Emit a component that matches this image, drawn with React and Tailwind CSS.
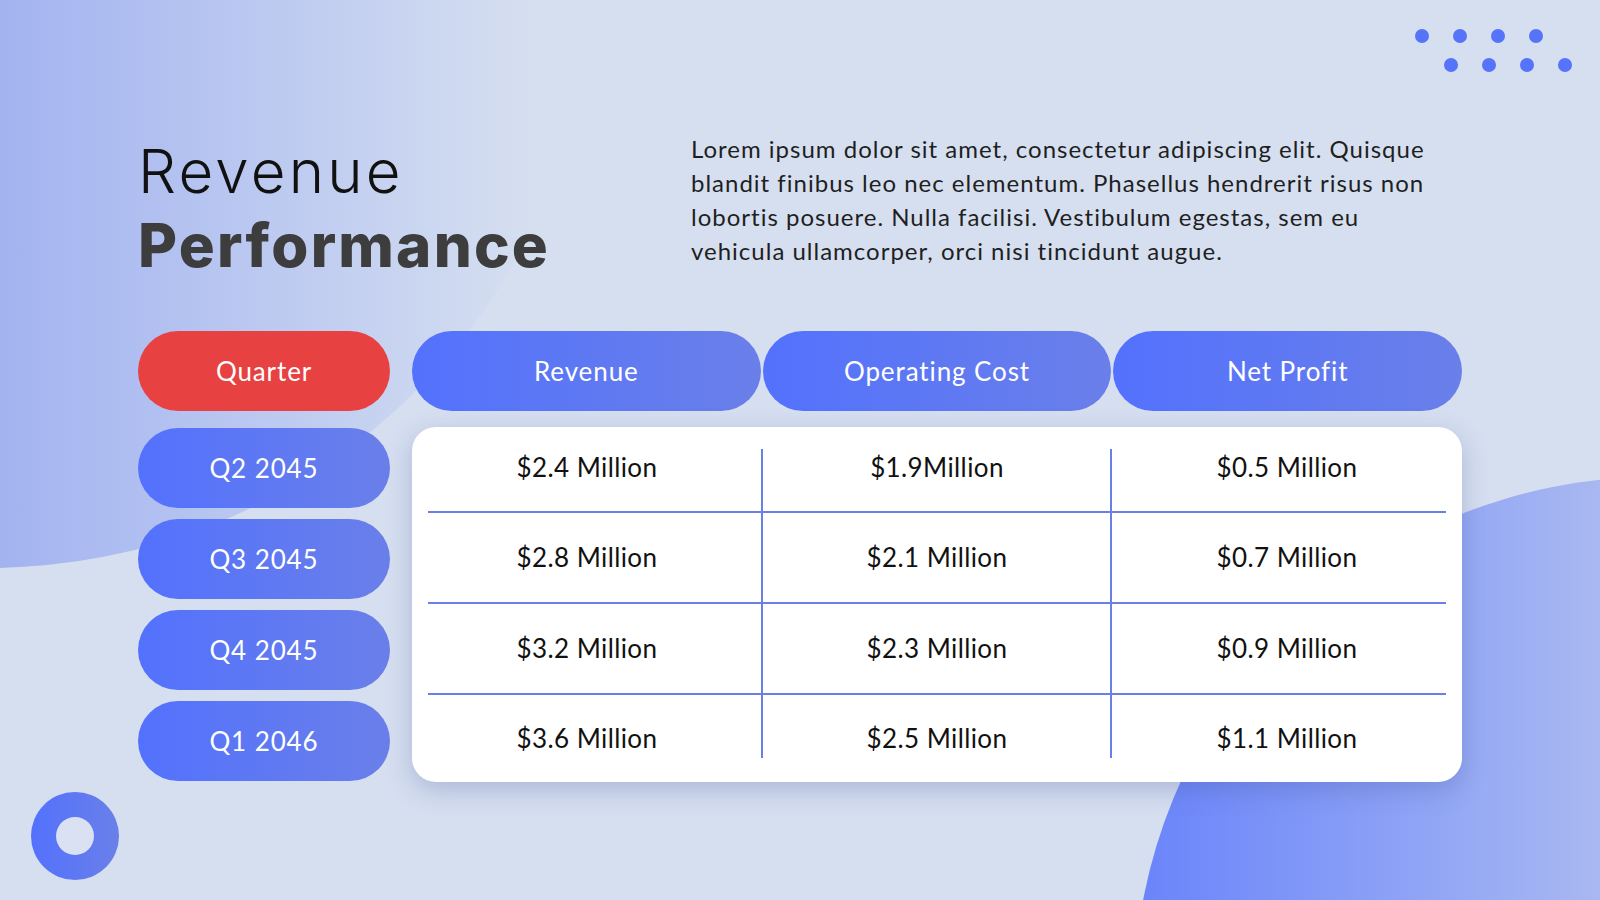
import React from 'react';

const headers = ['Revenue', 'Operating Cost', 'Net Profit'];

const rows = [
    { quarter: 'Q2 2045', values: ['$2.4 Million', '$1.9Million', '$0.5 Million'] },
    { quarter: 'Q3 2045', values: ['$2.8 Million', '$2.1 Million', '$0.7 Million'] },
    { quarter: 'Q4 2045', values: ['$3.2 Million', '$2.3 Million', '$0.9 Million'] },
    { quarter: 'Q1 2046', values: ['$3.6 Million', '$2.5 Million', '$1.1 Million'] },
];

// row heights inside the white card, matched to the quarter pills on the left
const rowClasses = ['h-[84px] pb-1', 'h-[89px]', 'h-[89px]', 'h-[87px]'];

const pill = 'flex items-center justify-center rounded-full text-white text-[26px] tracking-[0.9px] bg-gradient-to-r from-[#5371fd] to-[#6a7fe9]';

function Dots() {
    return (
        <div className="absolute top-[29px] left-[1415px] flex flex-col gap-[15px]">
            <div className="flex gap-[24px]">
                {[0, 1, 2, 3].map(i => <span key={i} className="block w-[14px] h-[14px] rounded-full bg-[#5574fa]" />)}
            </div>
            <div className="flex gap-[24px] pl-[29px]">
                {[0, 1, 2, 3].map(i => <span key={i} className="block w-[14px] h-[14px] rounded-full bg-[#5574fa]" />)}
            </div>
        </div>
    );
}

export default function App() {
    return (
        <div className="relative w-[1600px] h-[900px] overflow-hidden bg-[#d6dff0]" style={{ fontFamily: 'Lato, "Open Sans", sans-serif' }}>
            {/* background shapes */}
            <div className="absolute left-[-618px] top-[-644px] w-[1212px] h-[1212px] rounded-full bg-gradient-to-r from-[#a2b2f0] from-50% to-[#d6dff0] to-95%" />
            <div className="absolute left-[1134px] top-[477px] w-[1040px] h-[1040px] rounded-full bg-gradient-to-r from-[#6a83fa] to-[#a9b8f1] to-45%" />
            <div className="absolute left-[31px] top-[792px] w-[88px] h-[88px] rounded-full bg-gradient-to-r from-[#5371fd] to-[#6a7fe9] p-[25px]">
                <div className="w-full h-full rounded-full bg-[#d9e1f2]" />
            </div>
            <Dots />

            <div className="relative pl-[138px] pt-[132px]">
                <div className="flex">
                    <div className="w-[553px] mt-[2px] leading-[74px] text-[60px]" style={{ fontFamily: 'Inter, sans-serif' }}>
                        <div className="font-light tracking-[3.2px] text-[#111]">Revenue</div>
                        <div className="font-extrabold tracking-[2.2px] text-[#3d3d3d]">Performance</div>
                    </div>
                    <p className="w-[745px] text-[24px] leading-[34px] tracking-[1px] text-[#1f1f1f]">
                        Lorem ipsum dolor sit amet, consectetur adipiscing elit. Quisque blandit finibus leo nec elementum. Phasellus hendrerit risus non lobortis posuere. Nulla facilisi. Vestibulum egestas, sem eu vehicula ullamcorper, orci nisi tincidunt augue.
                    </p>
                </div>

                <div className="flex gap-[22px] mt-[49px]">
                    <div className="flex flex-col w-[252px]">
                        <div className="flex items-center justify-center h-[80px] rounded-full bg-[#e84141] text-white text-[26px] tracking-[0.9px]">Quarter</div>
                        <div className="flex flex-col gap-[11px] mt-[17px]">
                            {rows.map(r => (
                                <div key={r.quarter} className={`h-[80px] ${pill}`}>{r.quarter}</div>
                            ))}
                        </div>
                    </div>

                    <div className="flex flex-col w-[1050px]">
                        <div className="flex gap-[2px]">
                            {headers.map(h => (
                                <div key={h} className={`flex-1 h-[80px] ${pill}`}>{h}</div>
                            ))}
                        </div>

                        <div className="relative mt-[16px] h-[355px] rounded-[24px] bg-white shadow-[0_8px_26px_rgba(60,80,150,0.28)]">
                            <div className="absolute left-[349px] top-[22px] bottom-[24px] w-[2px] bg-[#6a80e4]" />
                            <div className="absolute left-[698px] top-[22px] bottom-[24px] w-[2px] bg-[#6a80e4]" />
                            {rows.map((r, i) => (
                                <React.Fragment key={r.quarter}>
                                    {i > 0 && <div className="mx-4 h-[2px] bg-[#6a80e4]" />}
                                    <div className={`grid grid-cols-3 items-center text-[26px] tracking-[0.4px] text-[#111] ${rowClasses[i]}`}>
                                        {r.values.map((v, j) => (
                                            <div key={j} className="text-center">{v}</div>
                                        ))}
                                    </div>
                                </React.Fragment>
                            ))}
                        </div>
                    </div>
                </div>
            </div>
        </div>
    );
}
